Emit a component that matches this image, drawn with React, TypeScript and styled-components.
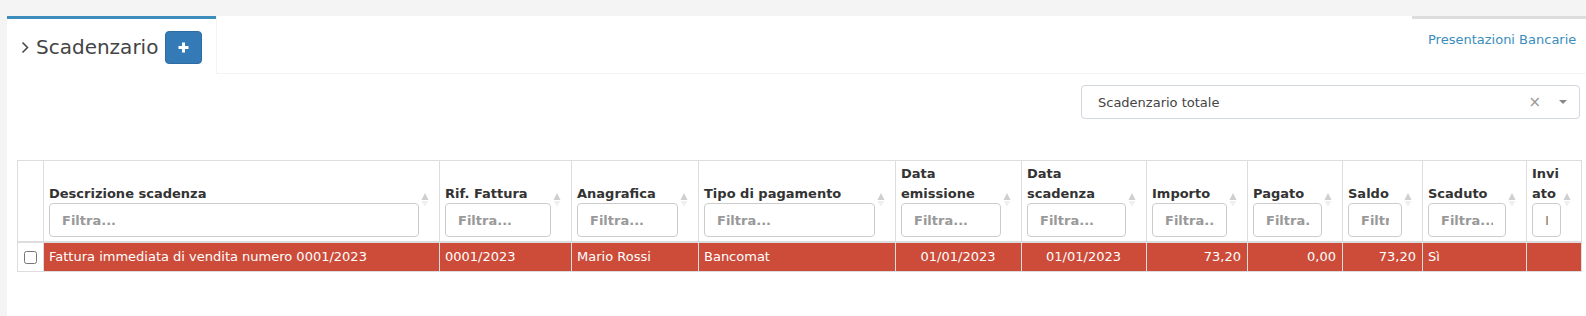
import styled, { createGlobalStyle } from "styled-components";

const GlobalStyle = createGlobalStyle`
	html, body {
		margin: 0;
		padding: 0;
		background: #f4f4f4;
		font-family: "DejaVu Sans", sans-serif;
		font-size: 13px;
		color: #333;
	}
`;

type Align = "left" | "center" | "right";

const columns: { label: string; width?: number; align: Align }[] = [
	{ label: "Descrizione scadenza", width: 396, align: "left" },
	{ label: "Rif. Fattura", width: 132, align: "left" },
	{ label: "Anagrafica", width: 127, align: "left" },
	{ label: "Tipo di pagamento", width: 197, align: "left" },
	{ label: "Data emissione", width: 126, align: "center" },
	{ label: "Data scadenza", width: 125, align: "center" },
	{ label: "Importo", width: 101, align: "right" },
	{ label: "Pagato", width: 95, align: "right" },
	{ label: "Saldo", width: 80, align: "right" },
	{ label: "Scaduto", width: 104, align: "left" },
	{ label: "Inviato", align: "left" },
];

const row = [
	"Fattura immediata di vendita numero 0001/2023",
	"0001/2023",
	"Mario Rossi",
	"Bancomat",
	"01/01/2023",
	"01/01/2023",
	"73,20",
	"0,00",
	"73,20",
	"Sì",
	"",
];

const Page = styled.div`
	min-height: 100vh;
	box-sizing: border-box;
	padding: 16px 0 0 7px;
`;

const Panel = styled.div`
	background: #fff;
	min-height: calc(100vh - 16px);
	box-sizing: border-box;
	padding-bottom: 20px;
`;

const TabBar = styled.div`
	display: flex;
	height: 58px;
`;

const ActiveTab = styled.div`
	width: 209px;
	box-sizing: border-box;
	border-top: 3px solid #3c8dbc;
	display: flex;
	align-items: center;
	padding-left: 14px;
	padding-top: 1px;
`;

const TabFill = styled.div`
	flex: 1;
	border-left: 1px solid #f4f4f4;
	border-bottom: 1px solid #f4f4f4;
`;

const SideTab = styled.div`
	width: 174px;
	box-sizing: border-box;
	border-top: 3px solid #ddd;
	border-bottom: 1px solid #f4f4f4;
	padding: 12px 0 0 16px;
`;

const SideLink = styled.a`
	font-size: 13px;
	line-height: 17px;
	color: #3c8dbc;
	text-decoration: none;
	white-space: nowrap;
`;

const Title = styled.h3`
	margin: 0;
	font-size: 20px;
	font-weight: normal;
	color: #444;
	display: flex;
	align-items: center;
	line-height: 26px;
`;

const Chevron = styled.svg`
	width: 8px;
	height: 13px;
	margin-right: 7px;
	margin-top: 1px;
`;

const AddButton = styled.button`
	width: 37px;
	height: 33px;
	margin-left: 7px;
	border: 1px solid #2e6da4;
	border-radius: 4px;
	background: #337ab7;
	display: flex;
	align-items: center;
	justify-content: center;
	padding: 0;
`;

const Content = styled.div`
	padding: 0 4px 0 10px;
`;

const SelectRow = styled.div`
	display: flex;
	justify-content: flex-end;
	margin-top: 11px;
	padding-right: 2px;
`;

const Select = styled.div`
	width: 499px;
	height: 34px;
	box-sizing: border-box;
	border: 1px solid #d2d6de;
	border-radius: 4px;
	display: flex;
	align-items: center;
	padding: 0 12px 0 16px;
	color: #444;
`;

const SelectText = styled.span`
	flex: 1;
`;

const Clear = styled.span`
	color: #999;
	font-size: 15px;
	margin-right: 18px;
`;

const Table = styled.table`
	margin-top: 41px;
	width: 100%;
	table-layout: fixed;
	border-collapse: collapse;
	border: 1px solid #ddd;
`;

const Th = styled.th`
	position: relative;
	border: 1px solid #ddd;
	border-bottom-width: 2px;
	padding: 3px 20px 4px 5px;
	vertical-align: bottom;
	text-align: left;
	font-weight: bold;
	color: #333;
	overflow-wrap: anywhere;
`;

const Label = styled.div`
	line-height: 19.5px;
`;

const Filter = styled.input`
	display: block;
	width: 100%;
	height: 34px;
	box-sizing: border-box;
	border: 1px solid #ccc;
	border-radius: 4px;
	padding: 6px 12px;
	font-family: "DejaVu Sans", sans-serif;
	font-size: 13px;
	font-weight: bold;
	background: #fff;
	&::placeholder {
		color: #999;
	}
`;

const SortIcon = styled.svg`
	position: absolute;
	right: 10px;
	top: calc(50% - 8px);
	width: 8px;
	height: 14px;
`;

const DangerRow = styled.tr`
	background: #cc4c39;
	color: #fff;
`;

const Td = styled.td<{ $align: Align }>`
	border: 1px solid #ddd;
	padding: 4px 6px 4px 5px;
	line-height: 20px;
	text-align: ${(p) => p.$align};
	white-space: nowrap;
	overflow: hidden;
`;

const CheckCell = styled.td`
	border: 1px solid #ddd;
	background: #fff;
	text-align: center;
	padding: 0;
`;

const Check = styled.input`
	margin: 4px 0 0;
	width: 13px;
	height: 13px;
`;

const Sort = () => (
	<SortIcon viewBox="0 0 8 14">
		<polygon points="0.5,7 4,0 7.5,7" fill="#cfcfcf" />
		<polygon points="0.5,8 7.5,8 4,13.5" fill="#efefef" />
	</SortIcon>
);

export default function App() {
	return (
		<>
			<GlobalStyle />
			<Page>
				<Panel>
					<TabBar>
						<ActiveTab>
							<Title>
								<Chevron viewBox="0 0 8 13">
									<polyline
										points="1.5,1.5 6.5,6.5 1.5,11.5"
										fill="none"
										stroke="#444"
										strokeWidth={1.5}
									/>
								</Chevron>
								Scadenzario
								<AddButton>
									<svg width="11" height="11" viewBox="0 0 11 11">
										<path d="M5.5 0.5v10M0.5 5.5h10" stroke="#fff" strokeWidth={3} />
									</svg>
								</AddButton>
							</Title>
						</ActiveTab>
						<TabFill />
						<SideTab>
							<SideLink href="#">Presentazioni Bancarie</SideLink>
						</SideTab>
					</TabBar>
					<Content>
						<SelectRow>
							<Select>
								<SelectText>Scadenzario totale</SelectText>
								<Clear>×</Clear>
								<svg width="8" height="4" viewBox="0 0 8 4">
									<polygon points="0,0 8,0 4,4" fill="#888" />
								</svg>
							</Select>
						</SelectRow>
						<Table>
							<colgroup>
								<col style={{ width: 26 }} />
								{columns.map((c) => (
									<col key={c.label} style={c.width ? { width: c.width } : undefined} />
								))}
							</colgroup>
							<thead>
								<tr>
									<Th />
									{columns.map((c) => (
										<Th key={c.label}>
											<Label>{c.label}</Label>
											<Filter placeholder="Filtra..." />
											<Sort />
										</Th>
									))}
								</tr>
							</thead>
							<tbody>
								<DangerRow>
									<CheckCell>
										<Check type="checkbox" />
									</CheckCell>
									{row.map((v, i) => (
										<Td key={i} $align={columns[i].align}>
											{v}
										</Td>
									))}
								</DangerRow>
							</tbody>
						</Table>
					</Content>
				</Panel>
			</Page>
		</>
	);
}
